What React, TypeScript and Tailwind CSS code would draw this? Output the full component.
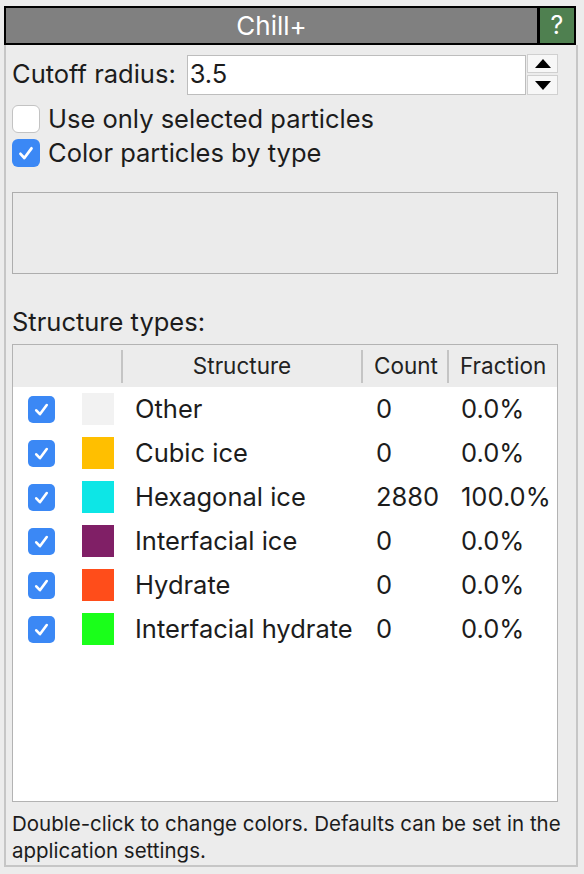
import React from "react";

const structures = [
  { name: "Other", color: "#f2f2f2", count: "0", fraction: "0.0%" },
  { name: "Cubic ice", color: "#ffbf00", count: "0", fraction: "0.0%" },
  { name: "Hexagonal ice", color: "#0de6e6", count: "2880", fraction: "100.0%" },
  { name: "Interfacial ice", color: "#801f66", count: "0", fraction: "0.0%" },
  { name: "Hydrate", color: "#ff4d1a", count: "0", fraction: "0.0%" },
  { name: "Interfacial hydrate", color: "#1aff1a", count: "0", fraction: "0.0%" },
];

function CheckMark({ size }: { size: number }) {
  return (
    <svg width={size} height={size} viewBox="0 0 16 16" fill="none">
      <path d="M4 8.6 L6.8 11.6 L12 4.6" stroke="white" strokeWidth="2" strokeLinecap="round" strokeLinejoin="round" />
    </svg>
  );
}

function Checkbox({ checked, size }: { checked: boolean; size: "lg" | "sm" }) {
  const dims = size === "lg" ? "h-[28px] w-[28px] rounded-[6px]" : "h-[27px] w-[27px] rounded-[5px]";
  if (!checked) {
    return <div className={`${dims} shrink-0 border border-[#c3c3c3] bg-white`} />;
  }
  return (
    <div className={`${dims} flex shrink-0 items-center justify-center bg-[#3b88f5]`}>
      <CheckMark size={size === "lg" ? 22 : 21} />
    </div>
  );
}

export default function App() {
  return (
    <div className="h-[874px] w-[584px] overflow-hidden bg-[#ececec] pt-[6px] font-['Inter','Liberation_Sans',sans-serif] text-[#1c1c1c]">
      <div className="mx-[4px] flex h-[39px] w-[572px] border-2 border-black">
        <div className="flex flex-1 items-center justify-center bg-[#808080] text-[26px] text-white">Chill+</div>
        <div className="flex w-[37px] items-center justify-center border-l-[3px] border-black bg-[#4f8050] text-[25px] text-white">?</div>
      </div>
      <div className="mx-[4px] flex h-[822px] w-[574px] flex-col border-2 border-t-0 border-[#c6c6c6] pl-[6px] pr-[18px] pt-[9px]">
        <div className="flex h-[41px] items-center">
          <span className="w-[175px] text-[25.5px]">Cutoff radius:</span>
          <div className="flex h-[40px] w-[340px] items-center border border-[#bdbdbd] bg-white pl-[2px] text-[25.5px]">3.5</div>
          <div className="ml-[1px] flex h-[41px] w-[31px] flex-col justify-between">
            <div className="flex h-[19px] items-center justify-center border border-[#d0d0d0] bg-[#f7f7f7]">
              <svg width="16" height="9" viewBox="0 0 16 9"><path d="M8 0 L16 9 L0 9 Z" fill="black" /></svg>
            </div>
            <div className="flex h-[20px] items-center justify-center border border-[#d0d0d0] bg-[#f7f7f7]">
              <svg width="16" height="9" viewBox="0 0 16 9"><path d="M0 0 L16 0 L8 9 Z" fill="black" /></svg>
            </div>
          </div>
        </div>
        <div className="mt-[9px] flex h-[30px] items-center gap-[8px]">
          <Checkbox checked={false} size="lg" />
          <span className="text-[25.5px]">Use only selected particles</span>
        </div>
        <div className="mt-[4px] flex h-[30px] items-center gap-[8px]">
          <Checkbox checked size="lg" />
          <span className="text-[25.5px]">Color particles by type</span>
        </div>
        <div className="mt-[24px] h-[82px] border border-[#adadad] bg-[#ebebeb]" />
        <div className="mt-[33px] flex h-[30px] items-center text-[25.5px]">Structure types:</div>
        <div className="mt-[7px] flex h-[458px] flex-col border border-[#b3b3b3] bg-white">
          <div className="flex h-[42px] shrink-0 items-center bg-[#ececec] text-[22.5px] text-[#222]">
            <div className="w-[108px]" />
            <div className="h-[33px] w-[2px] bg-[#c4c4c4]" />
            <div className="w-[238px] text-center">Structure</div>
            <div className="h-[33px] w-[2px] bg-[#c4c4c4]" />
            <div className="w-[84px] pl-[11px]">Count</div>
            <div className="h-[33px] w-[2px] bg-[#c4c4c4]" />
            <div className="flex-1 pl-[11px]">Fraction</div>
          </div>
          {structures.map((s) => (
            <div key={s.name} className="flex h-[44px] items-center text-[25.5px]">
              <div className="w-[69px] pl-[15px]">
                <Checkbox checked size="sm" />
              </div>
              <div className="h-[32px] w-[32px]" style={{ backgroundColor: s.color }} />
              <div className="w-[250px] whitespace-nowrap pl-[21px]">{s.name}</div>
              <div className="w-[86px] pl-[12px]">{s.count}</div>
              <div className="flex-1 whitespace-nowrap pl-[11px]">{s.fraction}</div>
            </div>
          ))}
        </div>
        <p className="-mr-[12px] mt-[8px] text-[20.5px] leading-[27px]">Double-click to change colors. Defaults can be set in the application settings.</p>
      </div>
    </div>
  );
}
